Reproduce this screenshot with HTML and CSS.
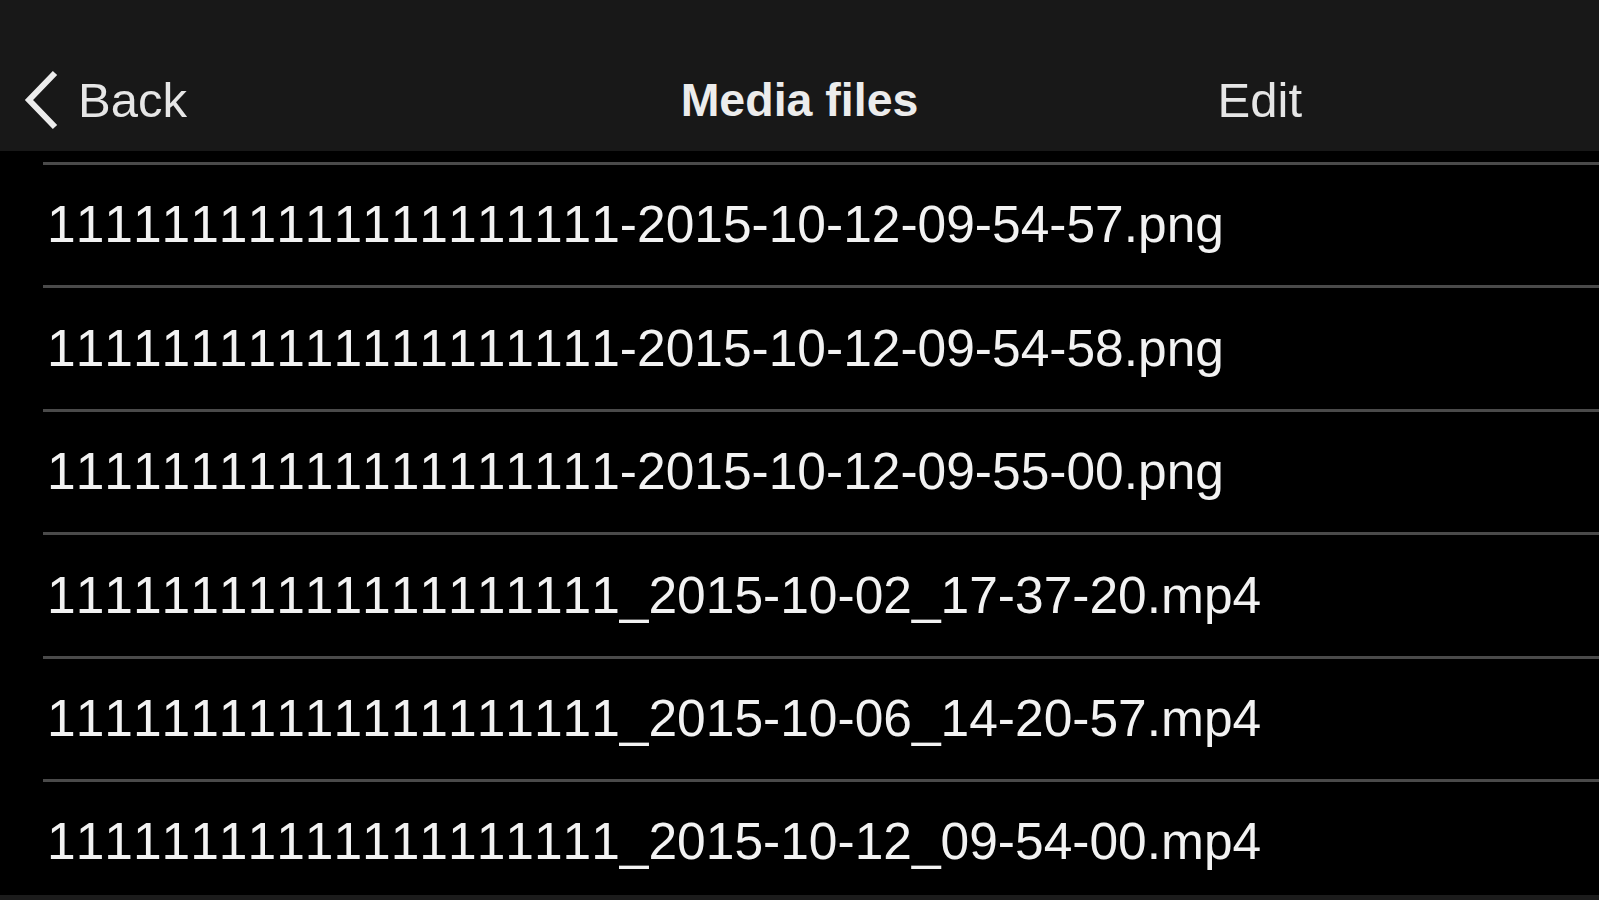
FILE: index.html
```html
<!DOCTYPE html>
<html lang="en">
<head>
<meta charset="utf-8">
<title>Media files</title>
<link rel="stylesheet" href="styles.css">
</head>
<body>
<div class="screen">
  <header class="navbar">
    <div class="nav-left">
      <svg class="chevron" width="40" height="60" viewBox="0 0 40 60" aria-hidden="true">
        <polyline points="33,3 7,30 33,57" fill="none" stroke="#ececec" stroke-width="6" stroke-linejoin="miter"/>
      </svg>
      <span class="nav-btn">Back</span>
    </div>
    <div class="nav-title">Media files</div>
    <div class="nav-right">
      <span class="nav-btn">Edit</span>
    </div>
  </header>
  <main class="list">
    <div class="row">11111111111111111111-2015-10-12-09-54-57.png</div>
    <div class="row">11111111111111111111-2015-10-12-09-54-58.png</div>
    <div class="row">11111111111111111111-2015-10-12-09-55-00.png</div>
    <div class="row">11111111111111111111_2015-10-02_17-37-20.mp4</div>
    <div class="row">11111111111111111111_2015-10-06_14-20-57.mp4</div>
    <div class="row">11111111111111111111_2015-10-12_09-54-00.mp4</div>
  </main>
  <footer class="bottom-bar"></footer>
</div>
</body>
</html>
```

FILE: styles.css
```css
* {
  box-sizing: border-box;
}

html, body {
  margin: 0;
  padding: 0;
  background: #000;
}

body {
  font-family: "Liberation Sans", Arial, sans-serif;
  font-kerning: none;
  color: #f0f0f0;
}

.screen {
  width: 1599px;
  height: 900px;
  display: flex;
  flex-direction: column;
  overflow: hidden;
}

.navbar {
  flex: 0 0 151px;
  background: #181818;
  padding-top: 50px;
  display: grid;
  grid-template-columns: 1fr auto 1fr;
  align-items: center;
}

.nav-left {
  display: flex;
  align-items: center;
  padding-left: 22px;
  gap: 16px;
}

.chevron {
  display: block;
  margin-top: -2px;
}

.nav-btn {
  font-size: 49px;
  color: #e6e6e6;
  line-height: 1;
}

.nav-title {
  font-size: 46.5px;
  font-weight: bold;
  color: #ececec;
  line-height: 1;
}

.nav-right {
  display: flex;
  justify-content: flex-end;
  padding-right: 297px;
}

.list {
  flex: 1 1 auto;
  overflow: hidden;
  padding-top: 11px;
  padding-left: 43px;
}

.row {
  height: 123.4px;
  border-top: 3px solid #4a4a4a;
  padding-left: 4px;
  display: flex;
  align-items: center;
  font-size: 51.5px;
  line-height: 1;
  color: #f2f2f2;
  white-space: nowrap;
}

.bottom-bar {
  flex: 0 0 5px;
  background: #1c1c1c;
}
```
